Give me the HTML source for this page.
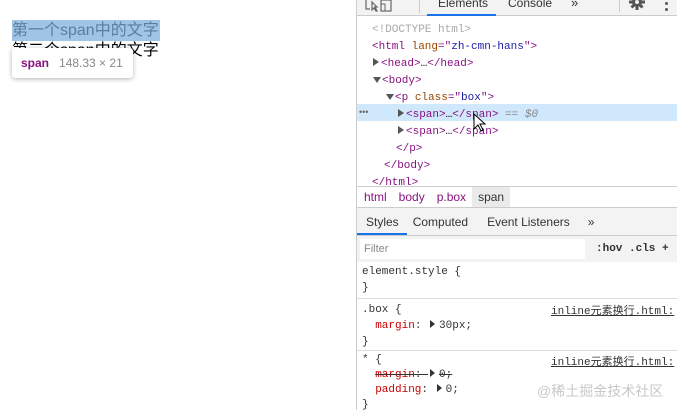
<!DOCTYPE html>
<html><head><style>
*{margin:0;padding:0;box-sizing:border-box}
body{width:677px;height:410px;overflow:hidden;background:#fff;position:relative;font-family:"Liberation Sans","Noto Sans CJK SC",sans-serif}
.a{position:absolute;white-space:nowrap}
.m{font-family:"Liberation Mono","DejaVu Sans Mono",monospace;font-size:11px}
.tag{color:#881280}.an{color:#994500}.av{color:#1a1aa6}.g{color:#a8a8a8}
.tri{display:inline-block;width:0;height:0;border-style:solid}
.r{border-width:4px 0 4px 6px;border-color:transparent transparent transparent #555}
.d{border-width:6px 4px 0 4px;border-color:#555 transparent transparent transparent}
.sr{border-width:4px 0 4px 5px;border-color:transparent transparent transparent #333;margin:0 4px 0 2px}
.p{color:#c80000}
</style></head><body>
<div class="a" style="left:12px;top:20px;width:148px;height:21px;background:#a0c4e6"></div>
<div class="a" style="left:12px;top:21px;font-size:16px;color:#5a7e9e;line-height:20px">第一个span中的文字</div>
<div class="a" style="left:12px;top:41px;font-size:16px;color:#000;line-height:20px">第二个span中的文字</div>
<div class="a" style="left:12px;top:48px;width:121px;height:30px;background:#fff;border-radius:3px;box-shadow:0 1px 5px rgba(0,0,0,.3);font-size:12px;line-height:30px;padding-left:9px"><b style="color:#881280">span</b><span style="color:#888;margin-left:10px">148.33 × 21</span></div>

<div class="a" style="left:356px;top:0;width:321px;height:410px;border-left:1px solid #ccc;background:#fff"></div>
<div class="a" style="left:357px;top:0;width:320px;height:16px;background:#f3f3f3;border-bottom:1px solid #ccc"></div>
<svg class="a" style="left:364px;top:0" width="30" height="14"><path d="M2 0v9h4M8 2l5 5-2 0 2 4-1 0-2-3-2 2z" fill="none" stroke="#666" stroke-width="1.2"/><rect x="17" y="0" width="10" height="11" fill="none" stroke="#666" stroke-width="1.2"/><path d="M17 4h4v7" stroke="#666" fill="none"/></svg>
<div class="a" style="left:419px;top:0;width:1px;height:13px;background:#ccc"></div>
<div class="a" style="left:438px;top:-4px;font-size:12px;color:#333">Elements</div>
<div class="a" style="left:427px;top:14px;width:69px;height:2px;background:#1a73e8"></div>
<div class="a" style="left:508px;top:-4px;font-size:12px;color:#333">Console</div>
<div class="a" style="left:571px;top:-5px;font-size:13px;color:#333">»</div>
<div class="a" style="left:619px;top:0;width:1px;height:12px;background:#ccc"></div>
<svg class="a" style="left:629px;top:-6px" width="16" height="16"><g stroke="#555" stroke-width="3"><line x1="8" y1="0" x2="8" y2="16"/><line x1="0" y1="8" x2="16" y2="8"/><line x1="2.5" y1="2.5" x2="13.5" y2="13.5"/><line x1="13.5" y1="2.5" x2="2.5" y2="13.5"/></g><circle cx="8" cy="8" r="5" fill="#555"/><circle cx="8" cy="8" r="2" fill="#f3f3f3"/></svg>
<div class="a" style="left:665px;top:2px;width:3px;height:3px;background:#555;border-radius:50%"></div>
<div class="a" style="left:665px;top:8px;width:3px;height:3px;background:#555;border-radius:50%"></div>

<div class="a" style="left:357px;top:104px;width:320px;height:17px;background:#cfe8fc"></div>
<div class="m a" style="left:372px;top:22px;line-height:17px">
<div class="g">&lt;!DOCTYPE html&gt;</div>
<div><span class="tag">&lt;html </span><span class="an">lang</span><span class="tag">="</span><span class="av">zh-cmn-hans</span><span class="tag">"&gt;</span></div>
<div style="margin-left:1px"><span class="tri r" style="margin-right:2px"></span><span class="tag">&lt;head&gt;</span>…<span class="tag">&lt;/head&gt;</span></div>
<div style="margin-left:1px"><span class="tri d" style="margin-right:1px"></span><span class="tag">&lt;body&gt;</span></div>
<div style="margin-left:14px"><span class="tri d" style="margin-right:1px"></span><span class="tag">&lt;p </span><span class="an">class</span><span class="tag">="</span><span class="av">box</span><span class="tag">"&gt;</span></div>
<div style="margin-left:26px"><span class="tri r" style="margin-right:2px"></span><span class="tag">&lt;span&gt;</span>…<span class="tag">&lt;/span&gt;</span> <span style="color:#888">== <i>$0</i></span></div>
<div style="margin-left:26px"><span class="tri r" style="margin-right:2px"></span><span class="tag">&lt;span&gt;</span>…<span class="tag">&lt;/span&gt;</span></div>
<div style="margin-left:24px" class="tag">&lt;/p&gt;</div>
<div style="margin-left:12px" class="tag">&lt;/body&gt;</div>
<div class="tag">&lt;/html&gt;</div>
</div>
<div class="a" style="left:359px;top:107px;font-size:9px;color:#666">•••</div>
<svg class="a" style="left:473px;top:113px" width="14" height="20"><path d="M1 1v15l4-4 3 6 2-1-3-6h5z" fill="#fff" stroke="#000"/></svg>

<div class="a" style="left:357px;top:186px;width:320px;height:22px;border-top:1px solid #ccc;border-bottom:1px solid #ccc;font-size:12px;line-height:20px;color:#881280">
<span style="margin-left:7px">html</span><span style="margin-left:12px">body</span><span style="margin-left:12px">p.box</span><span style="display:inline-block;background:#eaeaea;color:#333;padding:0 6px;margin-left:6px">span</span></div>
<div class="a" style="left:357px;top:208px;width:320px;height:28px;background:#f3f3f3;border-bottom:1px solid #ccc;font-size:12px;line-height:28px;color:#333">
<span style="margin-left:9px">Styles</span><span style="margin-left:14px">Computed</span><span style="margin-left:19px">Event Listeners</span><span style="margin-left:18px">»</span></div>
<div class="a" style="left:357px;top:233px;width:50px;height:2px;background:#1a73e8"></div>
<div class="a" style="left:357px;top:236px;width:320px;height:26px;background:#f3f3f3"></div>
<div class="a" style="left:360px;top:239px;width:225px;height:20px;background:#fff;font-size:11px;color:#888;line-height:20px;padding-left:4px">Filter</div>
<div class="a m" style="left:596px;top:243px;color:#333;font-weight:bold">:hov .cls +</div>
<div class="a m" style="left:362px;top:264px;line-height:16px;color:#333">element.style {<br>}</div>
<div class="a" style="left:357px;top:298px;width:320px;height:1px;background:#ddd"></div>
<div class="a m" style="left:362px;top:302px;line-height:16px;color:#333">.box {<br>&nbsp;&nbsp;<span class="p">margin</span>: <span class="tri sr"></span>30px;<br>}</div>
<div class="a m" style="left:551px;top:302px;color:#333;text-decoration:underline">inline元素换行.html:</div>
<div class="a" style="left:357px;top:350px;width:320px;height:1px;background:#ddd"></div>
<div class="a m" style="left:362px;top:353px;line-height:15px;color:#333">* {<br>&nbsp;&nbsp;<s><span class="p">margin</span>: <span class="tri sr"></span>0;</s><br>&nbsp;&nbsp;<span class="p">padding</span>: <span class="tri sr"></span>0;<br>}</div>
<div class="a m" style="left:551px;top:353px;color:#333;text-decoration:underline">inline元素换行.html:</div>
<div class="a" style="left:537px;top:381px;font-size:14px;color:#c8c8c8">@稀土掘金技术社区</div>
</body></html>
